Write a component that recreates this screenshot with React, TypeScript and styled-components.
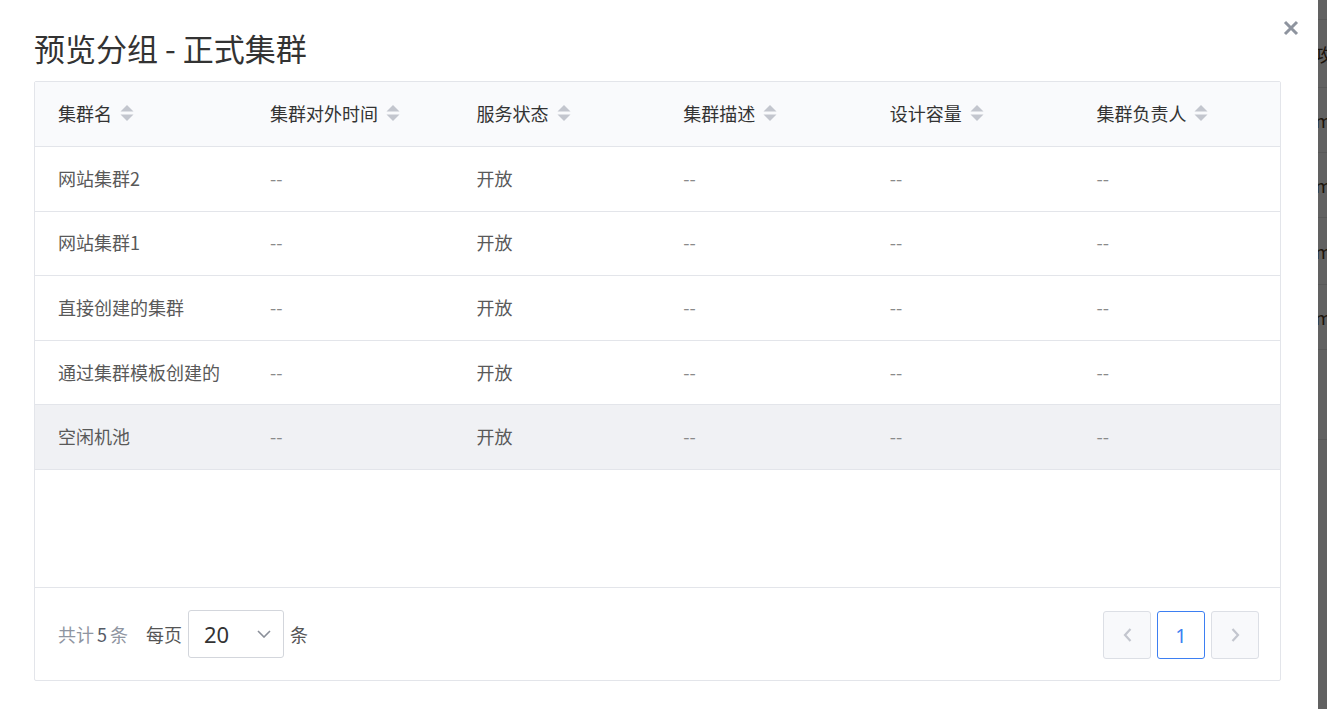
import React from "react";
import styled, { createGlobalStyle } from "styled-components";

const GlobalStyle = createGlobalStyle`
  html, body { margin: 0; padding: 0; }
  body {
    width: 1327px;
    height: 709px;
    overflow: hidden;
    background: #ffffff;
    font-family: "Noto Sans CJK SC", "Noto Sans", sans-serif;
  }
`;

/* ---------- page behind the dialog ---------- */
const Underlay = styled.div`
  display: flex;
  flex-direction: column;
  width: 1327px;
  height: 709px;
  background: #ffffff;
`;

const UnderRow = styled.div<{ $h: number; $line?: boolean }>`
  display: grid;
  grid-template-columns: 1fr 11px;
  align-items: center;
  height: ${(p) => p.$h}px;
  border-bottom: ${(p) => (p.$line ? "1px solid #e8e8e8" : "none")};
  box-sizing: border-box;
  font-size: 18px;
  color: #4a3520;
`;

const UnderCell = styled.span`
  grid-column: 2;
  white-space: nowrap;
  margin-left: -1px;
`;

const Mask = styled.div`
  position: fixed;
  inset: 0;
  background: rgba(0, 0, 0, 0.62);
`;

/* ---------- dialog ---------- */
const Dialog = styled.div`
  position: fixed;
  left: 0;
  top: 0;
  width: 1318px;
  height: 709px;
  background: #ffffff;
  box-sizing: border-box;
  padding: 30px 37px 0 34px;
  display: flex;
  flex-direction: column;
`;

const Title = styled.h2`
  margin: 0 0 15px 0;
  font-size: 31px;
  line-height: 36px;
  font-weight: 400;
  color: #333333;
`;

const CloseButton = styled.button`
  position: absolute;
  right: 18px;
  top: 19px;
  width: 18px;
  height: 18px;
  padding: 0;
  border: none;
  background: transparent;
  display: flex;
  align-items: center;
  justify-content: center;
`;

const TableBox = styled.div`
  border: 1px solid #e3e5ea;
  border-radius: 2px;
  display: flex;
  flex-direction: column;
`;

const Grid = styled.div`
  display: grid;
  grid-template-columns: 212px repeat(5, 1fr);
`;

const HeadRow = styled(Grid)`
  height: 64px;
  background: #f9fafc;
  border-bottom: 1px solid #e3e5ea;
  align-items: center;
`;

const HeadCell = styled.div`
  display: flex;
  align-items: center;
  gap: 8px;
  padding-left: 23px;
  font-size: 18px;
  color: #333333;
  white-space: nowrap;
  margin-top: -2px;
`;

const Body = styled.div`
  height: 440px;
  display: flex;
  flex-direction: column;
  border-bottom: 1px solid #e3e5ea;
`;

const Row = styled(Grid)<{ $hover?: boolean }>`
  height: 64.6px;
  box-sizing: border-box;
  border-bottom: 1px solid #e3e5ea;
  align-items: center;
  background: ${(p) => (p.$hover ? "#f0f1f4" : "#ffffff")};
`;

const Cell = styled.div<{ $muted?: boolean }>`
  padding-left: 23px;
  font-size: 18px;
  color: ${(p) => (p.$muted ? "#8a8a8a" : "#595959")};
  white-space: nowrap;
  margin-top: -2px;
`;

const Footer = styled.div`
  height: 92px;
  display: flex;
  align-items: center;
  justify-content: space-between;
  padding: 0 21px 0 23px;
`;

const FooterLeft = styled.div`
  display: flex;
  align-items: center;
  font-size: 18px;
  color: #555555;
`;

const Total = styled.span`
  color: #8f95a1;
  margin-right: 18px;
`;

const TotalNum = styled.span`
  color: #555b66;
  margin: 0 3px;
`;

const Select = styled.div`
  width: 96px;
  height: 48px;
  box-sizing: border-box;
  margin: 0 6px;
  border: 1px solid #d3d6dc;
  border-radius: 3px;
  display: flex;
  align-items: center;
  justify-content: space-between;
  padding: 0 12px 0 15px;
  font-size: 22px;
  color: #333333;
  font-family: "Noto Sans", "Noto Sans CJK SC", sans-serif;
`;

const Pager = styled.div`
  display: flex;
  gap: 6px;
  margin-top: 2px;
`;

const PageButton = styled.button<{ $active?: boolean }>`
  width: 48px;
  height: 48px;
  box-sizing: border-box;
  padding: 0;
  border-radius: 3px;
  border: 1px solid ${(p) => (p.$active ? "#3d7ff2" : "#dcdfe5")};
  background: ${(p) => (p.$active ? "#ffffff" : "#f8f9fb")};
  color: #3d7ff2;
  font-size: 20px;
  font-family: "Noto Sans", sans-serif;
  display: flex;
  align-items: center;
  justify-content: center;
`;

const SortIcon = () => (
  <svg width="14" height="18" viewBox="0 0 14 18">
    <path d="M7 1 L13.5 7.5 H0.5 Z" fill="#c3c6ce" />
    <path d="M7 17 L13.5 10.5 H0.5 Z" fill="#c3c6ce" />
  </svg>
);

const headers = ["集群名", "集群对外时间", "服务状态", "集群描述", "设计容量", "集群负责人"];
const rows = ["网站集群2", "网站集群1", "直接创建的集群", "通过集群模板创建的", "空闲机池"];

const underRows: { h: number; text?: string; line?: boolean }[] = [
  { h: 20, line: true },
  { h: 68, text: "攻", line: true },
  { h: 65, text: "m", line: true },
  { h: 65, text: "m", line: true },
  { h: 67, text: "m", line: true },
  { h: 65, text: "m", line: true },
  { h: 90, line: true },
];

export default function App() {
  return (
    <>
      <GlobalStyle />
      <Underlay>
        {underRows.map((r, i) => (
          <UnderRow key={i} $h={r.h} $line={r.line}>
            {r.text && <UnderCell>{r.text}</UnderCell>}
          </UnderRow>
        ))}
      </Underlay>
      <Mask />
      <Dialog>
        <Title>预览分组 - 正式集群</Title>
        <CloseButton aria-label="关闭">
          <svg width="16" height="16" viewBox="0 0 16 16">
            <path d="M2 2 L14 14 M14 2 L2 14" stroke="#8e949f" strokeWidth="3" strokeLinecap="butt" />
          </svg>
        </CloseButton>
        <TableBox>
          <HeadRow>
            {headers.map((h) => (
              <HeadCell key={h}>
                {h}
                <SortIcon />
              </HeadCell>
            ))}
          </HeadRow>
          <Body>
            {rows.map((name, i) => (
              <Row key={name} $hover={i === rows.length - 1}>
                <Cell>{name}</Cell>
                <Cell $muted>--</Cell>
                <Cell>开放</Cell>
                <Cell $muted>--</Cell>
                <Cell $muted>--</Cell>
                <Cell $muted>--</Cell>
              </Row>
            ))}
          </Body>
          <Footer>
            <FooterLeft>
              <Total>
                共计<TotalNum>5</TotalNum>条
              </Total>
              每页
              <Select>
                20
                <svg width="14" height="8" viewBox="0 0 14 8">
                  <path d="M1 1 L7 7 L13 1" stroke="#8a8f99" strokeWidth="1.6" fill="none" />
                </svg>
              </Select>
              条
            </FooterLeft>
            <Pager>
              <PageButton aria-label="上一页">
                <svg width="9" height="14" viewBox="0 0 9 14">
                  <path d="M7.5 1 L2 7 L7.5 13" stroke="#c3c6ce" strokeWidth="2.2" fill="none" />
                </svg>
              </PageButton>
              <PageButton $active>1</PageButton>
              <PageButton aria-label="下一页">
                <svg width="9" height="14" viewBox="0 0 9 14">
                  <path d="M1.5 1 L7 7 L1.5 13" stroke="#c3c6ce" strokeWidth="2.2" fill="none" />
                </svg>
              </PageButton>
            </Pager>
          </Footer>
        </TableBox>
      </Dialog>
    </>
  );
}
